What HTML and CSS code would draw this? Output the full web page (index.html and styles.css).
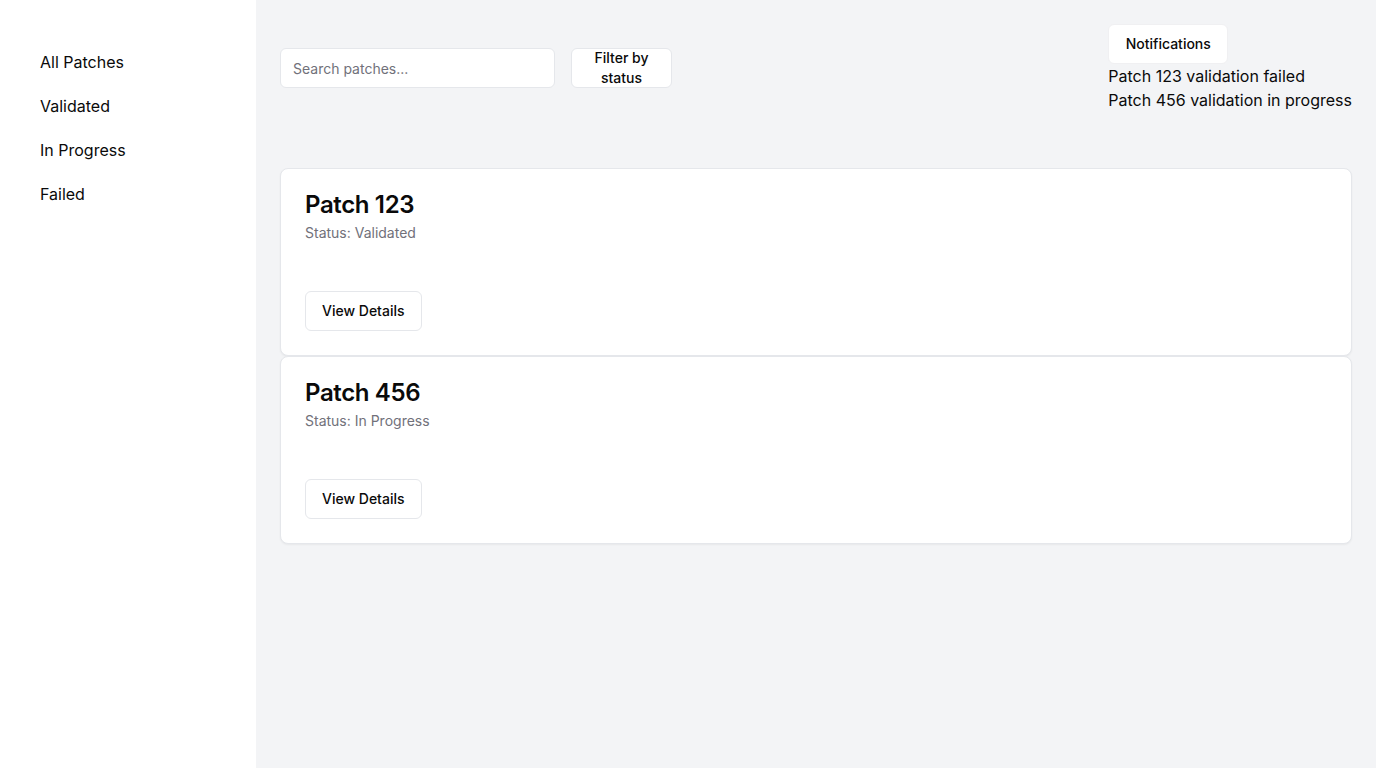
FILE: index.html
```html
<!DOCTYPE html>
<html lang="en">
<head>
<meta charset="utf-8">
<title>Patches</title>
<link rel="stylesheet" href="styles.css">
</head>
<body>
<div class="app">
  <aside class="sidebar">
    <nav class="nav">
      <a class="nav-item" href="#">All Patches</a>
      <a class="nav-item" href="#">Validated</a>
      <a class="nav-item" href="#">In Progress</a>
      <a class="nav-item" href="#">Failed</a>
    </nav>
  </aside>
  <main class="main">
    <header class="header">
      <div class="tools">
        <input class="search" type="text" placeholder="Search patches...">
        <button class="btn filter">Filter by status</button>
      </div>
      <div class="notifications">
        <button class="btn notif-btn">Notifications</button>
        <ul class="notif-list">
          <li>Patch 123 validation failed</li>
          <li>Patch 456 validation in progress</li>
        </ul>
      </div>
    </header>
    <section class="cards">
      <div class="card">
        <div class="card-header">
          <h3 class="card-title">Patch 123</h3>
          <p class="card-desc">Status: Validated</p>
        </div>
        <div class="card-content"></div>
        <div class="card-footer">
          <button class="btn outline">View Details</button>
        </div>
      </div>
      <div class="card">
        <div class="card-header">
          <h3 class="card-title">Patch 456</h3>
          <p class="card-desc">Status: In Progress</p>
        </div>
        <div class="card-content"></div>
        <div class="card-footer">
          <button class="btn outline">View Details</button>
        </div>
      </div>
    </section>
  </main>
</div>
</body>
</html>
```
FILE: styles.css
```css
* { box-sizing: border-box; }
html, body { margin: 0; padding: 0; }
body {
  font-family: Inter, "Noto Sans", "Liberation Sans", sans-serif;
  color: #0a0a0a;
  background: #f3f4f6;
}
.app {
  display: flex;
  min-height: 768px;
}
.sidebar {
  width: 256px;
  flex-shrink: 0;
  background: #ffffff;
  padding: 40px 24px;
}
.nav {
  display: flex;
  flex-direction: column;
}
.nav-item {
  display: block;
  padding: 10px 16px;
  font-size: 16px;
  line-height: 24px;
  color: #0a0a0a;
  text-decoration: none;
}
.main {
  flex: 1;
  padding: 24px;
  background: #f3f4f6;
}
.header {
  display: flex;
  justify-content: space-between;
  align-items: center;
  margin-bottom: 56px;
}
.tools {
  display: flex;
  gap: 16px;
  align-items: center;
}
.search {
  width: 275px;
  height: 40px;
  border: 1px solid #e5e7eb;
  border-radius: 6px;
  background: #fff;
  padding: 8px 12px;
  font-family: inherit;
  font-size: 14px;
  color: #0a0a0a;
  outline: none;
}
.search::placeholder { color: #71717a; }
.btn {
  display: inline-flex;
  align-items: center;
  justify-content: center;
  height: 40px;
  padding: 8px 16px;
  font-family: inherit;
  font-size: 14px;
  font-weight: 500;
  line-height: 20px;
  color: #0a0a0a;
  background: #fff;
  border: 1px solid #e5e7eb;
  border-radius: 6px;
  cursor: pointer;
}
.filter {
  width: 101px;
  text-align: center;
}
.notif-btn { width: 120px; border-color: #f0f0f2; }
.notifications {
  display: flex;
  flex-direction: column;
  align-items: flex-start;
}
.notif-list {
  list-style: none;
  margin: 0;
  padding: 0;
  font-size: 16px;
  line-height: 24px;
}
.cards {
  display: flex;
  flex-direction: column;
}
.card {
  background: #fff;
  border: 1px solid #e5e7eb;
  border-radius: 8px;
  box-shadow: 0 1px 2px rgba(0,0,0,0.05);
}
.card-header {
  padding: 24px;
  display: flex;
  flex-direction: column;
  gap: 6px;
}
.card-title {
  margin: 0;
  font-size: 24px;
  line-height: 24px;
  font-weight: 600;
  letter-spacing: -0.015em;
}
.card-desc {
  margin: 0;
  font-size: 14px;
  line-height: 20px;
  color: #71717a;
}
.card-content {
  padding: 0 24px 24px;
}
.card-footer {
  display: flex;
  align-items: center;
  padding: 0 24px 24px;
}
.outline { padding: 8px 16px; }
```
